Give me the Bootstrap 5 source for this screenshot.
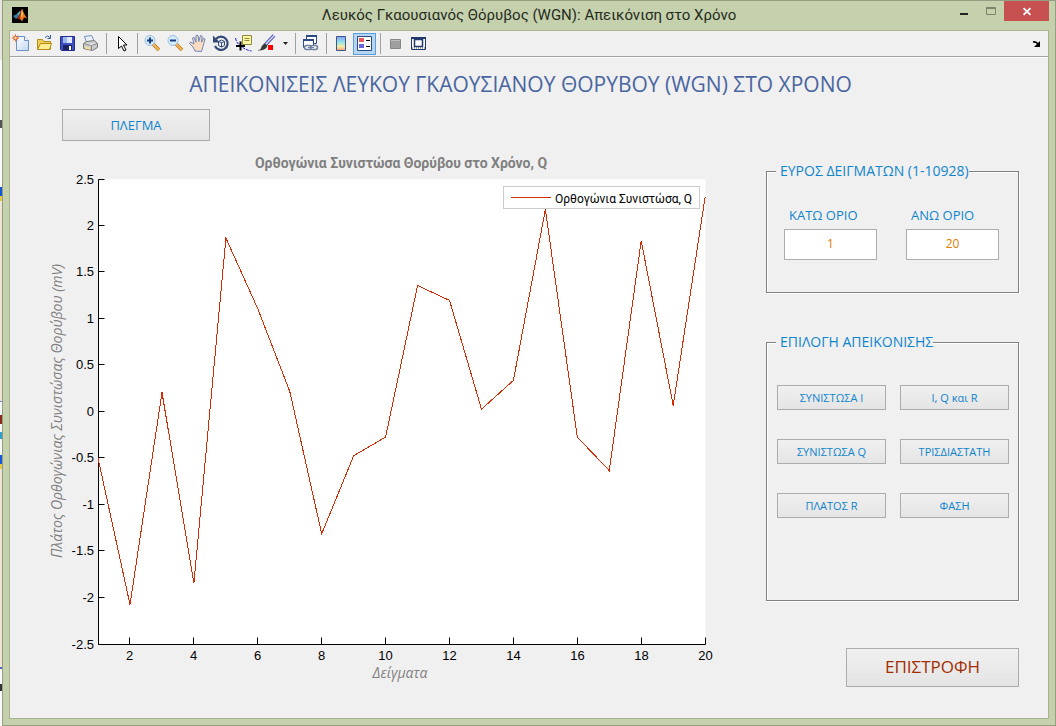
<!DOCTYPE html>
<html lang="el">
<head>
<meta charset="utf-8">
<meta name="viewport" content="width=device-width, initial-scale=1">
<title>Λευκός Γκαουσιανός Θόρυβος (WGN): Απεικόνιση στο Χρόνο</title>
<link href="https://cdn.jsdelivr.net/npm/bootstrap@5.3.0/dist/css/bootstrap.min.css" rel="stylesheet">
<style>
  body {
    font-family: "Open Sans", "Noto Sans", sans-serif;
    padding-left: 2px;
    background: linear-gradient(#e8e4e0 0 60px, #fafafa 60px 120px, #555 120px 128px, #fafafa 128px 187px, #1457d8 187px 196px, #e3c94a 196px 201px, #ece5d8 201px 401px, #6f83c4 401px 402px, #f4f6fa 402px 415px, #8a2a1e 415px 424px, #f4f6fa 424px 432px, #2a9fd0 432px 439px, #f4f6fa 439px 455px, #1457d8 455px 464px, #e3c94a 464px 469px, #ece5d8 469px 667px, #4a64c0 667px 669px, #fafafa 669px 684px, #333 684px 691px, #fafafa 691px);
  }
  .fig-window { background: #c5d1ad; border: 1px solid #959f80; padding: 0 6px 6px; }
  .fig-title { height: 29px; font: 15px/29px Roboto, sans-serif; color: #262b21; }
  .fig-title .app-logo { width: 16px; height: 16px; margin: 6px 0 0 3px; }
  .win-btn { border: 0; background: transparent; padding: 0; width: 27px; height: 20px; }
  .win-btn.close-btn { width: 45px; background: #c75050; }
  .fig-body { border: 1px solid #a8b38d; background: #f0f0f0; }
  .tool-strip { height: 26px; border-bottom: 1px solid #a0a0a0; box-shadow: 0 1px #fff; }
  .tool { border: 0; background: transparent; padding: 0 2px 0 1px; width: 23px; height: 22px; line-height: 0; }
  .tool svg { width: 20px; height: 20px; }
  .tool.tool-on { background: #b5d6f3; box-shadow: inset 0 0 0 1px #5a9fdc; }
  .tool-caret { width: 12px; padding: 0; }
  .tool-caret svg { width: 12px; }
  .tool-sep { width: 8px; height: 21px; background: linear-gradient(#a0a0a0, #a0a0a0) center / 1px 100% no-repeat; }
  .fig-content { padding: 13px 29px 29px 36px; }
  .fig-heading { font-size: 21px; line-height: 28px; padding-right: 24px; color: #4a66a0; }
  .main-row { column-gap: 60px; }
  .side { width: 253px; flex: none; padding-top: 63px; }
  .push {
    font-size: 11px; line-height: 23px; padding: 0; color: #0f85cc;
    border: 1px solid #acacac; border-radius: 0;
    background: linear-gradient(#f0f0f0, #e4e4e4);
  }
  .push:hover { color: #0f85cc; border-color: #7eb4ea; }
  .push-grid { width: 148px; font-size: 13px; line-height: 30px; margin: 11px 0 0 16px; }
  .push-back { width: 173px; font-size: 17px; line-height: 35px; padding-bottom: 2px; margin-top: 47px; color: #a32d00; }
  .push-back:hover { color: #a32d00; }
  .panel-box { border: 1px solid #808080; box-shadow: 1px 1px #fff, inset 1px 1px #fff; }
  .panel-box legend { font-size: 14px; line-height: 20px; color: #0f85cc; background: #f0f0f0; padding: 0 0 0 4px; margin-left: 9px; position: relative; }
  .range-fields { padding: 26px 19px 32px 17px; column-gap: 29px; }
  .range-fields label { font-size: 13px; line-height: 16px; margin-bottom: 6px; padding-left: 5px; color: #0f85cc; }
  .range-fields input { font-size: 12px; line-height: 17px; height: 31px; padding: 5px 2px 7px; border: 1px solid #abadb3; border-radius: 0; color: #de7d00; }
  .view-box { margin-top: 39px; }
  .view-grid { display: grid; grid-template-columns: 1fr 1fr; gap: 29px 14px; padding: 33px 9px 82px 10px; }
  .chart { width: 100%; height: auto; overflow: visible; }
  .axis-text { font: 13px "Liberation Sans", sans-serif; fill: #000; }
  .axis-name { font-size: 14px; font-style: italic; fill: #808080; }
  .chart-name { font: bold 14px Roboto, sans-serif; fill: #808080; }
  .series-name { font: 12px Roboto, sans-serif; fill: #000; }
</style>
</head>
<body class="vh-100 d-flex flex-column">
<div class="fig-window flex-grow-1 d-flex flex-column">
  <header class="fig-title d-flex position-relative">
    <svg class="app-logo me-auto" viewBox="0 0 16 16" aria-hidden="true">
      <path fill="#000" d="M0 0h16v16H0z"/>
      <path fill="#2c7fa0" d="M1 9l4-2 3-3 1 1-3 6-2 1z"/><path fill="#54b8c9" d="M5 7l3-3 1 1-2 3z"/>
      <path fill="#a52a12" d="M4 11l2-1 4-8 1 6 0 5-2-2-2 2-1-2z"/>
      <path fill="#ee7a22" d="M10 1.500l2 5 3 5-3-1-2 4-2-3z"/><path fill="#f9c24f" d="M10 2l1 5-1 4-1-3z"/>
    </svg>
    <div class="position-absolute start-50 translate-middle-x text-nowrap">Λευκός Γκαουσιανός Θόρυβος (WGN): Απεικόνιση στο Χρόνο</div>
    <button class="win-btn d-flex" aria-label="Ελαχιστοποίηση"><svg width="27" height="20" viewBox="0 0 27 20"><path fill="#222" d="M10 12h8v2h-8z"/></svg></button>
    <button class="win-btn d-flex" aria-label="Μεγιστοποίηση"><svg width="27" height="20" viewBox="0 0 27 20"><path fill="none" stroke="#79866a" d="M9.500 6.500h9v7h-9zM9.500 7.500h9"/></svg></button>
    <button class="win-btn close-btn d-flex" aria-label="Κλείσιμο"><svg width="45" height="20" viewBox="0 0 45 20"><path stroke="#fff" stroke-width="1.800" d="M19.500 7.200l7 6.600M26.500 7.200l-7 6.600"/></svg></button>
  </header>
  <main class="fig-body flex-grow-1">
    <div class="tool-strip d-flex align-items-center" role="toolbar" aria-label="Εργαλεία">
      <button class="tool" aria-label="Νέο"><svg viewBox="0 0 20 20"><defs><linearGradient id="pg" x2="1" y2="1"><stop stop-color="#fff"/><stop offset="1" stop-color="#c3d7f2"/></linearGradient></defs><path fill="url(#pg)" stroke="#6d8fc4" d="M5.500 2.500h8l4 4v10h-12z"/><path fill="#fff" stroke="#6d8fc4" d="M13.500 2.500v4h4"/><path stroke="#e08a60" d="M2 1.500l5 5M7 1.500l-5 5M4.500 0v8M.5 4h8"/><circle cx="4.500" cy="4" r="1.800" fill="#fbe6b0" stroke="#d9541e"/></svg></button>
      <button class="tool" aria-label="Άνοιγμα"><svg viewBox="0 0 20 20"><path fill="#f0cf58" stroke="#b28c14" d="M3.500 15.500v-10h5l1 2h7v8z"/><path fill="#ffed92" stroke="#b28c14" d="M3.500 15.500l3-6h11l-2 6z"/><path fill="none" stroke="#3c5f96" d="M11 3.500q3-3 5 0M16.500 1v3.500h-3"/></svg></button>
      <button class="tool" aria-label="Αποθήκευση"><svg viewBox="0 0 20 20"><path fill="#3f4fc8" stroke="#232d86" d="M3.500 2.500h14v14h-13l-1-1z"/><path fill="#dfe9fa" d="M6 3h9v6H6z"/><path fill="#9db6ec" d="M6 3h4v6H6z"/><path fill="#1c2466" d="M6 11h9v5H6z"/><path fill="#fff" d="M12 12h2v4h-2z"/></svg></button>
      <button class="tool" aria-label="Εκτύπωση"><svg viewBox="0 0 20 20"><path fill="#e9f1fc" stroke="#7890b6" d="M4.500 2.500l7-1 3 6-8 1z"/><path fill="#cbcbcb" stroke="#777" d="M3.500 9.500l3-2 8-1 3 3v4l-5 3-9-2z"/><path fill="#efefef" stroke="#8b8b8b" d="M3.500 9.500l8 2 6-2M11.500 11.500v5"/><path fill="#f5e28d" d="M5 12.500l5 1.200v2l-5-1.200z"/></svg></button>
      <span class="tool-sep"></span>
      <button class="tool" aria-label="Επιλογή"><svg viewBox="0 0 20 20"><path fill="#fff" stroke="#000" d="M7.500 2.500v12l3-2.500 2.500 5 2-1-2.500-5h3.500z"/></svg></button>
      <span class="tool-sep"></span>
      <button class="tool" aria-label="Μεγέθυνση"><svg viewBox="0 0 20 20"><path stroke="#b9791f" stroke-width="3.500" d="M11 10l6 6"/><path stroke="#f2b75a" stroke-width="2" d="M11 10l6 6"/><circle cx="8" cy="6.500" r="5" fill="#d5ecfa" stroke="#9dbfe4"/><path stroke="#1a3c86" stroke-width="2" d="M5 6.500h6M8 3.500v6"/></svg></button>
      <button class="tool" aria-label="Σμίκρυνση"><svg viewBox="0 0 20 20"><path stroke="#b9791f" stroke-width="3.500" d="M11 10l6 6"/><path stroke="#f2b75a" stroke-width="2" d="M11 10l6 6"/><circle cx="8" cy="6.500" r="5" fill="#d5ecfa" stroke="#9dbfe4"/><path stroke="#1a3c86" stroke-width="2" d="M5 6.500h6"/></svg></button>
      <button class="tool" aria-label="Μετακίνηση"><svg viewBox="0 0 20 20"><path fill="#fbdcc0" stroke="#6f86b8" d="M7 17l-2-4-3.500-3.500 1-1.500 3.500 2-1.500-6 1.500-.8 2 5V1.500h2l.8 6 1.700-6 1.700.7-.7 6 2-4 1.500.8-2 7.500-1.500 5z"/></svg></button>
      <button class="tool" aria-label="Περιστροφή"><svg viewBox="0 0 20 20"><path fill="none" stroke="#344a75" stroke-width="2.200" d="M5 5a6.600 6.600 0 1 1-1 7"/><path fill="#344a75" d="M2 1.500v7h7z"/><path fill="#e9eef8" stroke="#344a75" d="M7.500 7.500l3-1.500 3 1.500v4l-3 1.500-3-1.500zM7.500 7.500l3 1.200 3-1.200M10.500 8.700V13"/></svg></button>
      <button class="tool" aria-label="Δείκτης δεδομένων"><svg viewBox="0 0 20 20"><path fill="none" stroke="#1414e6" stroke-dasharray="3 1" d="M1.500 4q1 5 5 8 5 4 11 5"/><path fill="#fcf7a5" stroke="#8f8b3a" d="M8.500 1.500h9v9h-9z"/><path stroke="#8f8b3a" d="M10.500 4.500h5M10.500 6.500h5"/><path stroke="#000" stroke-width="2" d="M2 12h9M6.500 7.500v9"/></svg></button>
      <button class="tool" aria-label="Πινέλο"><svg viewBox="0 0 20 20"><path stroke="#5757b0" stroke-width="3.500" d="M9 10l8-8.500"/><path stroke="#d4d4fa" stroke-width="1.500" d="M9 10l8-8.500"/><path fill="#383838" d="M1 16q3 0 3.500-3.500L7.500 9l3 2.500q-1 5-9.500 5z"/><path fill="#f00" d="M11 11h5v5h-5z"/></svg></button>
      <button class="tool tool-caret" aria-label="Επιλογές πινέλου"><svg viewBox="0 0 12 20"><path fill="#222" d="M4 8h5L6.500 11z"/></svg></button>
      <span class="tool-sep"></span>
      <button class="tool" aria-label="Σύνδεση"><svg viewBox="0 0 20 20"><path fill="#fff" stroke="#2e4a85" d="M6.500 1.500h10v8h-10z"/><path fill="#2e4a85" d="M6 1h11v2H6z"/><path fill="#fff" stroke="#2e4a85" d="M3.500 5.500h10v8h-10z"/><path fill="#2e4a85" d="M3 5h11v2H3z"/><rect x="4.500" y="11.500" width="7" height="4" rx="2" fill="#eef3f9" stroke="#6d7f9c" stroke-width="1.500"/><rect x="10.500" y="11.500" width="7" height="4" rx="2" fill="#eef3f9" stroke="#6d7f9c" stroke-width="1.500"/><path stroke="#6d7f9c" d="M8 13.500h6"/></svg></button>
      <span class="tool-sep"></span>
      <button class="tool" aria-label="Χρωματική κλίμακα"><svg viewBox="0 0 20 20"><defs><linearGradient id="cb" x2="0" y2="1"><stop stop-color="#8a9df0"/><stop offset=".4" stop-color="#8fe3ea"/><stop offset=".7" stop-color="#f4efa0"/><stop offset="1" stop-color="#f2a184"/></linearGradient></defs><path fill="url(#cb)" stroke="#3d5489" d="M5.500 2.500h9v14h-9z"/></svg></button>
      <button class="tool tool-on" aria-label="Υπόμνημα" aria-pressed="true"><svg viewBox="0 0 20 20"><path fill="#fff" stroke="#2e4a85" d="M3.500 2.500h14v14h-14z"/><path fill="#e65c5c" d="M5 4h5v4H5z"/><path fill="#6666e0" d="M5 10h5v4H5z"/><path stroke="#111" d="M12 6.500h4M12 12.500h4"/></svg></button>
      <span class="tool-sep"></span>
      <button class="tool" aria-label="Απόκρυψη εργαλείων"><svg viewBox="0 0 20 20"><path fill="#a0a0a0" stroke="#868686" d="M5.500 5.500h10v9h-10z"/><path stroke="#bdbdbd" d="M6 6.500h9"/></svg></button>
      <button class="tool" aria-label="Εμφάνιση εργαλείων"><svg viewBox="0 0 20 20"><path fill="#fff" stroke="#22386c" d="M3.500 3.500h14v12h-14z"/><path fill="#22386c" d="M3 3h15v2H3z"/><path stroke="#a9a995" stroke-dasharray="1 1" stroke-width="2" d="M4 14h13"/><path fill="#fff" stroke="#22386c" stroke-width="1.500" d="M6.500 5.500h8v7h-8z"/></svg></button>
      <button class="tool ms-auto" aria-label="Αγκύρωση"><svg viewBox="0 0 20 20"><path stroke="#000" stroke-width="1.500" d="M7 8q3-1 5 2"/><path fill="#000" d="M14 7v6H8z"/></svg></button>
    </div>
    <div class="fig-content">
      <h1 class="fig-heading fw-normal text-center mb-0">ΑΠΕΙΚΟΝΙΣΕΙΣ ΛΕΥΚΟΥ ΓΚΑΟΥΣΙΑΝΟΥ ΘΟΡΥΒΟΥ (WGN) ΣΤΟ ΧΡΟΝΟ</h1>
      <div class="main-row d-flex align-items-start">
        <section class="flex-grow-1">
          <button class="btn push push-grid d-block">ΠΛΕΓΜΑ</button>
          <svg id="chart" class="chart d-block mt-2" viewBox="0 0 660 534" role="img" aria-label="Ορθογώνια Συνιστώσα Θορύβου στο Χρόνο, Q"></svg>
        </section>
        <section class="side d-flex flex-column">
          <fieldset class="panel-box">
            <legend class="float-none w-auto mb-0">ΕΥΡΟΣ ΔΕΙΓΜΑΤΩΝ (1-10928)</legend>
            <div class="range-fields d-flex">
              <div class="flex-fill"><label for="low" class="d-block">ΚΑΤΩ ΟΡΙΟ</label><input id="low" class="form-control text-center" value="1"></div>
              <div class="flex-fill"><label for="high" class="d-block">ΑΝΩ ΟΡΙΟ</label><input id="high" class="form-control text-center" value="20"></div>
            </div>
          </fieldset>
          <fieldset class="panel-box view-box">
            <legend class="float-none w-auto mb-0">ΕΠΙΛΟΓΗ ΑΠΕΙΚΟΝΙΣΗΣ</legend>
            <div class="view-grid">
              <button class="btn push">ΣΥΝΙΣΤΩΣΑ I</button>
              <button class="btn push">I, Q και R</button>
              <button class="btn push">ΣΥΝΙΣΤΩΣΑ Q</button>
              <button class="btn push">ΤΡΙΣΔΙΑΣΤΑΤΗ</button>
              <button class="btn push">ΠΛΑΤΟΣ R</button>
              <button class="btn push">ΦΑΣΗ</button>
            </div>
          </fieldset>
          <button class="btn push push-back align-self-end">ΕΠΙΣΤΡΟΦΗ</button>
        </section>
      </div>
    </div>
  </main>
</div>
<script src="https://cdn.jsdelivr.net/npm/bootstrap@5.3.0/dist/js/bootstrap.bundle.min.js"></script>
<script>
  const samples = [-0.5, -2.07, 0.21, -1.84, 1.87, 1.11, 0.22, -1.31, -0.47, -0.27, 1.36, 1.2, 0.03, 0.34, 2.18, -0.27, -0.63, 1.84, 0.07, 2.31];
  const left = 52.5, top0 = 30.5, plotW = 607, plotH = 465;
  const px = n => left + (n - 1) * plotW / 19;
  const py = v => top0 + (2.5 - v) * plotH / 5;
  const snap = v => Math.floor(v) + 0.5;
  let out = `<rect x="${left}" y="${top0}" width="${plotW}" height="${plotH}" fill="#fff"/>`;
  out += `<path fill="none" stroke="#000" d="M${left} ${top0}V${top0 + plotH}H${left + plotW}"/>`;
  for (let i = 0; i <= 10; i++) {
    const v = 2.5 - i / 2, y = snap(py(v) - 0.6 + (i % 10 ? 0 : 0.6));
    out += `<path stroke="#000" d="M${left} ${y}h6"/><text class="axis-text" text-anchor="end" x="48" y="${y + 4}">${v}</text>`;
  }
  for (let n = 2; n <= 20; n += 2) {
    const x = snap(px(n) - 0.5);
    out += `<path stroke="#000" d="M${x} ${top0 + plotH}v-7"/><text class="axis-text" text-anchor="middle" x="${x}" y="511">${n}</text>`;
  }
  out += `<polyline fill="none" stroke="#d62a00" shape-rendering="crispEdges" points="${samples.map((v, i) => (px(i + 1) - 0.4).toFixed(1) + ',' + py(v).toFixed(1)).join(' ')}"/>`;
  out += `<text class="chart-name" text-anchor="middle" x="355" y="19">Ορθογώνια Συνιστώσα Θορύβου στο Χρόνο, Q</text>
    <text class="axis-name" text-anchor="middle" x="354" y="529">Δείγματα</text>
    <text class="axis-name" text-anchor="middle" transform="translate(16 262) rotate(-90)">Πλάτος Ορθογώνιας Συνιστώσας Θορύβου (mV)</text>
    <rect x="457.5" y="37.5" width="196" height="22" fill="#fff" stroke="#ccc"/>
    <path stroke="#d62a00" d="M465 48.5h40"/>
    <text class="series-name" x="509" y="54">Ορθογώνια Συνιστώσα, Q</text>`;
  document.getElementById('chart').innerHTML = out;
</script>
</body>
</html>
